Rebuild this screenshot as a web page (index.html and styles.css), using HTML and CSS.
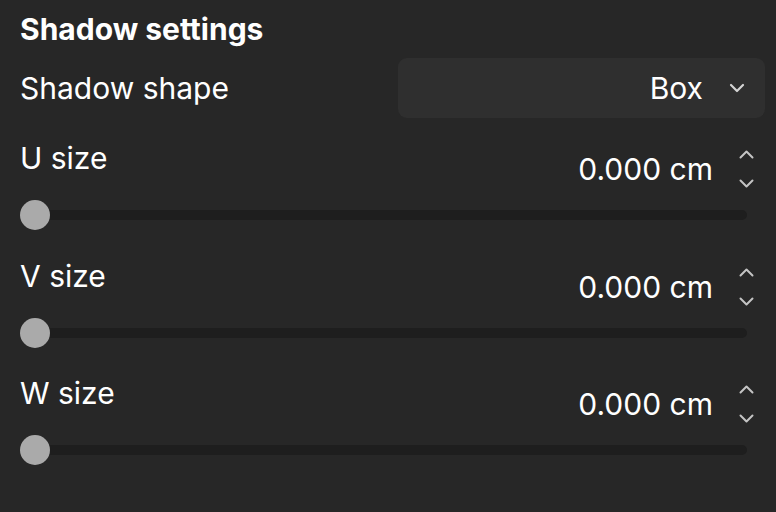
FILE: index.html
```html
<!DOCTYPE html>
<html>
<head>
<meta charset="utf-8">
<link rel="stylesheet" href="styles.css">
</head>
<body>
<div class="panel">
  <div class="title">Shadow settings</div>
  <div class="row-select">
    <span class="label">Shadow shape</span>
    <div class="select">
      <span class="select-value">Box</span>
      <svg class="chev" width="16" height="10" viewBox="0 0 16 10"><path d="M2 2 L8 8 L14 2" fill="none" stroke="#d4d4d4" stroke-width="2.2" stroke-linecap="round" stroke-linejoin="round"/></svg>
    </div>
  </div>

  <div class="field">
    <div class="field-head">
      <span class="label">U size</span>
      <div class="num">
        <span class="num-value">0.000 cm</span>
        <div class="spin">
          <svg width="15" height="9" viewBox="0 0 15 9"><path d="M1.5 7.5 L7.5 1.5 L13.5 7.5" fill="none" stroke="#c4c4c4" stroke-width="2" stroke-linecap="round" stroke-linejoin="round"/></svg>
          <svg width="15" height="9" viewBox="0 0 15 9"><path d="M1.5 1.5 L7.5 7.5 L13.5 1.5" fill="none" stroke="#c4c4c4" stroke-width="2" stroke-linecap="round" stroke-linejoin="round"/></svg>
        </div>
      </div>
    </div>
    <div class="slider"><div class="track"></div><div class="thumb"></div></div>
  </div>

  <div class="field">
    <div class="field-head">
      <span class="label">V size</span>
      <div class="num">
        <span class="num-value">0.000 cm</span>
        <div class="spin">
          <svg width="15" height="9" viewBox="0 0 15 9"><path d="M1.5 7.5 L7.5 1.5 L13.5 7.5" fill="none" stroke="#c4c4c4" stroke-width="2" stroke-linecap="round" stroke-linejoin="round"/></svg>
          <svg width="15" height="9" viewBox="0 0 15 9"><path d="M1.5 1.5 L7.5 7.5 L13.5 1.5" fill="none" stroke="#c4c4c4" stroke-width="2" stroke-linecap="round" stroke-linejoin="round"/></svg>
        </div>
      </div>
    </div>
    <div class="slider"><div class="track"></div><div class="thumb"></div></div>
  </div>

  <div class="field">
    <div class="field-head">
      <span class="label">W size</span>
      <div class="num">
        <span class="num-value">0.000 cm</span>
        <div class="spin">
          <svg width="15" height="9" viewBox="0 0 15 9"><path d="M1.5 7.5 L7.5 1.5 L13.5 7.5" fill="none" stroke="#c4c4c4" stroke-width="2" stroke-linecap="round" stroke-linejoin="round"/></svg>
          <svg width="15" height="9" viewBox="0 0 15 9"><path d="M1.5 1.5 L7.5 7.5 L13.5 1.5" fill="none" stroke="#c4c4c4" stroke-width="2" stroke-linecap="round" stroke-linejoin="round"/></svg>
        </div>
      </div>
    </div>
    <div class="slider"><div class="track"></div><div class="thumb"></div></div>
  </div>
</div>
</body>
</html>
```
FILE: styles.css
```css
html, body {
  margin: 0;
  padding: 0;
  background: #272727;
  width: 776px;
  height: 512px;
  overflow: hidden;
}
body {
  font-family: Inter, "Noto Sans", sans-serif;
  color: #ffffff;
}
.panel {
  padding: 11px 11px 0 20px;
  display: flex;
  flex-direction: column;
}
.title {
  font-size: 30px;
  font-weight: 700;
  line-height: 36px;
  height: 36px;
}
.label {
  font-size: 30px;
  line-height: 36px;
}
.row-select {
  margin-top: 11px;
  display: flex;
  align-items: center;
  justify-content: space-between;
}
.select {
  width: 367px;
  height: 60px;
  box-sizing: border-box;
  background: #2f2f2f;
  border-radius: 9px;
  display: flex;
  align-items: center;
  justify-content: flex-end;
  padding-right: 20px;
}
.select-value {
  font-size: 30px;
  line-height: 36px;
}
.chev {
  margin-left: 26px;
}
.field {
  display: flex;
  flex-direction: column;
  margin-top: 22px;
}
.field + .field { margin-top: 27.5px; }
.field-head {
  display: flex;
  justify-content: space-between;
  align-items: flex-start;
}
.num {
  display: flex;
  align-items: center;
  margin-top: 10px;
  margin-right: 11px;
}
.num-value {
  font-size: 30px;
  line-height: 36px;
}
.spin {
  display: flex;
  flex-direction: column;
  gap: 20px;
  margin-left: 26px;
}
.spin svg { display: block; }
.slider {
  position: relative;
  height: 30px;
  margin-top: 12px;
  margin-right: 18px;
}
.track {
  position: absolute;
  left: 14px;
  right: 0;
  top: 10px;
  height: 10px;
  border-radius: 5px;
  background: #1e1e1e;
}
.thumb {
  position: absolute;
  left: 0;
  top: 0;
  width: 30px;
  height: 30px;
  border-radius: 50%;
  background: #aaaaaa;
}
```
